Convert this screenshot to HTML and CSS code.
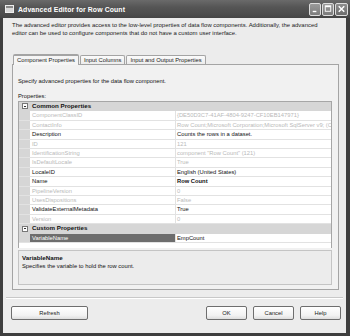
FILE: index.html
```html
<!DOCTYPE html>
<html>
<head>
<meta charset="utf-8">
<link rel="stylesheet" href="styles.css">
</head>
<body>
<div class="window">
  <div class="titlebar">
    <div class="app-icon"><div class="app-icon-bar"></div></div>
    <div class="title">Advanced Editor for Row Count</div>
    <div class="caption-buttons">
      <div class="cap-btn"><svg width="11" height="12" viewBox="0 0 11 12"><rect x="3" y="8" width="4" height="1.5" fill="#fff"/></svg></div>
      <div class="cap-btn"><svg width="11" height="12" viewBox="0 0 11 12"><rect x="2.5" y="2.5" width="6" height="6" fill="none" stroke="#fff" stroke-width="1"/><rect x="2.5" y="2.5" width="6" height="1.5" fill="#fff"/></svg></div>
      <div class="cap-btn close"><svg width="12" height="12" viewBox="0 0 12 12"><path d="M3 3 L9 9 M9 3 L3 9" stroke="#fff" stroke-width="1.6"/></svg></div>
    </div>
  </div>
  <div class="content">
    <p class="intro">The advanced editor provides access to the low-level properties of data flow components. Additionally, the advanced<br>editor can be used to configure components that do not have a custom user interface.</p>
    <div class="tabs">
      <div class="tab active">Component Properties</div>
      <div class="tab">Input Columns</div>
      <div class="tab">Input and Output Properties</div>
    </div>
    <div class="panel">
      <p class="panel-text">Specify advanced properties for the data flow component.</p>
      <p class="panel-label">Properties:</p>
      <div class="grid">
        <div class="row header"><div class="indent"><span class="toggle"></span></div><div class="hname">Common Properties</div></div>
        <div class="row disabled"><div class="indent"></div><div class="name">ComponentClassID</div><div class="value">{DE50D3C7-41AF-4804-9247-CF10EB147971}</div></div>
        <div class="row disabled"><div class="indent"></div><div class="name">ContactInfo</div><div class="value">Row Count;Microsoft Corporation;Microsoft SqlServer v9; (C</div></div>
        <div class="row"><div class="indent"></div><div class="name">Description</div><div class="value">Counts the rows in a dataset.</div></div>
        <div class="row disabled"><div class="indent"></div><div class="name">ID</div><div class="value">121</div></div>
        <div class="row disabled"><div class="indent"></div><div class="name">IdentificationString</div><div class="value">component "Row Count" (121)</div></div>
        <div class="row disabled"><div class="indent"></div><div class="name">IsDefaultLocale</div><div class="value">True</div></div>
        <div class="row"><div class="indent"></div><div class="name">LocaleID</div><div class="value">English (United States)</div></div>
        <div class="row"><div class="indent"></div><div class="name">Name</div><div class="value bold">Row Count</div></div>
        <div class="row disabled"><div class="indent"></div><div class="name">PipelineVersion</div><div class="value">0</div></div>
        <div class="row disabled"><div class="indent"></div><div class="name">UsesDispositions</div><div class="value">False</div></div>
        <div class="row"><div class="indent"></div><div class="name">ValidateExternalMetadata</div><div class="value">True</div></div>
        <div class="row disabled"><div class="indent"></div><div class="name">Version</div><div class="value">0</div></div>
        <div class="row header"><div class="indent"><span class="toggle"></span></div><div class="hname">Custom Properties</div></div>
        <div class="row selected"><div class="indent"></div><div class="name">VariableName</div><div class="value">EmpCount</div></div>
      </div>
      <div class="help-pane">
        <div class="help-title">VariableName</div>
        <div class="help-text">Specifies the variable to hold the row count.</div>
      </div>
    </div>
    <div class="separator"></div>
    <div class="buttons">
      <button class="btn refresh">Refresh</button>
      <div class="spacer"></div>
      <button class="btn">OK</button>
      <button class="btn">Cancel</button>
      <button class="btn">Help</button>
    </div>
  </div>
</div>
</body>
</html>
```
FILE: styles.css
```css
* { box-sizing: border-box; }
html, body { margin: 0; padding: 0; }
body {
  width: 350px;
  height: 336px;
  background: #ffffff;
  font-family: "Liberation Sans", Arial, sans-serif;
  font-size: 5.8px;
  color: #111;
}
.window {
  width: 350px;
  height: 336px;
  display: flex;
  flex-direction: column;
  background: #3e3e3e;
  padding: 0 4px 3px 3px;
}
.titlebar {
  height: 18px;
  flex: none;
  display: flex;
  align-items: center;
  background: linear-gradient(#6a6a6a, #555 40%, #4c4c4c 80%, #444);
  margin: 0 -4px 0 -3px;
  padding: 0 2px 0 5px;
}
.app-icon {
  width: 9px;
  height: 8px;
  background: #d8d8d8;
  border: 1px solid #eee;
  position: relative;
}
.app-icon-bar {
  height: 2px;
  background: #888;
}
.title {
  color: #fff;
  font-weight: bold;
  font-size: 6.9px;
  margin-left: 4px;
  flex: 1;
  letter-spacing: 0.1px;
}
.caption-buttons {
  display: flex;
  gap: 1px;
}
.cap-btn {
  width: 12px;
  height: 13px;
  border: 1px solid #ddd;
  border-radius: 2px;
  background: linear-gradient(#9a9a9a, #7c7c7c);
  display: flex;
  align-items: center;
  justify-content: center;
}
.cap-btn.close {
  width: 13px;
  background: linear-gradient(#8e8e8e, #6c6c6c);
}
.content {
  flex: 1;
  background: #ececec;
  display: flex;
  flex-direction: column;
  padding: 0 7px 0 9px;
}
.intro {
  margin: 3px 0 0 0;
  line-height: 8.4px;
  font-size: 5.95px;
  color: #1a1a1a;
  white-space: nowrap;
}
.tabs {
  display: flex;
  margin-top: 15px;
  height: 11px;
  align-items: flex-end;
  padding-left: 1px;
}
.tab {
  height: 9px;
  line-height: 8px;
  padding: 0 3px;
  border: 1px solid #a4a4a4;
  border-bottom: none;
  border-radius: 2px 2px 0 0;
  background: linear-gradient(#fbfbfb, #ececec);
  margin-right: 1px;
  color: #222;
}
.tab.active {
  height: 11px;
  line-height: 9px;
  background: #f5f5f5;
  border-top: 2px solid #bdbdbd;
  position: relative;
  top: 1px;
  z-index: 1;
  border-color: #a4a4a4;
}
.panel {
  height: 226px;
  border: 1px solid #a4a4a4;
  background: #f1f1f1;
  display: flex;
  flex-direction: column;
  padding: 0 6px 0 5px;
}
.panel-text {
  margin: 12px 0 0 0;
  line-height: 8px;
}
.panel-label {
  margin: 7px 0 0 0;
  line-height: 8px;
}
.grid {
  margin-top: 1px;
  height: 147px;
  background: #fff;
  border: 1px solid #a6a6a6;
  border-bottom: none;
  display: flex;
  flex-direction: column;
}
.row {
  height: 9.43px;
  flex: none;
  display: flex;
  border-bottom: 1px solid #e2e2e2;
  line-height: 8.4px;
  white-space: nowrap;
  overflow: hidden;
}
.indent {
  width: 11px;
  flex: none;
  background: #d6d6d6;
  display: flex;
  align-items: center;
  justify-content: center;
}
.name {
  width: 146px;
  flex: none;
  padding-left: 2px;
  border-right: 1px solid #e2e2e2;
  overflow: hidden;
}
.value {
  flex: 1;
  padding-left: 1px;
  overflow: hidden;
}
.bold { font-weight: bold; }
.row.header {
  background: #d6d6d6;
  border-bottom-color: #d6d6d6;
}
.hname {
  font-weight: bold;
  padding-left: 2px;
  font-size: 6.2px;
}
.toggle {
  width: 6px;
  height: 6px;
  border: 1px solid #777;
  background: #fff;
  position: relative;
}
.toggle::after {
  content: "";
  position: absolute;
  left: 1px;
  top: 1.5px;
  width: 2px;
  height: 1px;
  background: #333;
}
.row.disabled .name, .row.disabled .value { color: #b9b9b9; }
.row.selected .name {
  background: #6d6d6d;
  color: #fff;
}
.help-pane {
  margin-top: 2px;
  height: 35px;
  border: 1px solid #c4c4c4;
  background: #ececec;
  padding: 3px 0 0 3px;
  line-height: 8px;
}
.help-title { font-weight: bold; font-size: 6.2px; }
.separator {
  margin: 7px -4px 0 -6px;
  height: 2px;
  border-top: 1px solid #c8c8c8;
  border-bottom: 1px solid #fff;
}
.buttons {
  display: flex;
  margin-top: 7px;
  padding-left: 0;
  gap: 6px;
  margin-left: -1px;
  margin-right: -2px;
}
.spacer { flex: 1; }
.btn {
  font-family: "Liberation Sans", Arial, sans-serif;
  font-size: 5.8px;
  height: 14px;
  width: 41px;
  border: 1px solid #6e6e6e;
  border-radius: 2px;
  background: linear-gradient(#ffffff, #f2f2f2 70%, #dedede);
  color: #222;
  padding: 0;
}
.btn.refresh { width: 77px; }
```
